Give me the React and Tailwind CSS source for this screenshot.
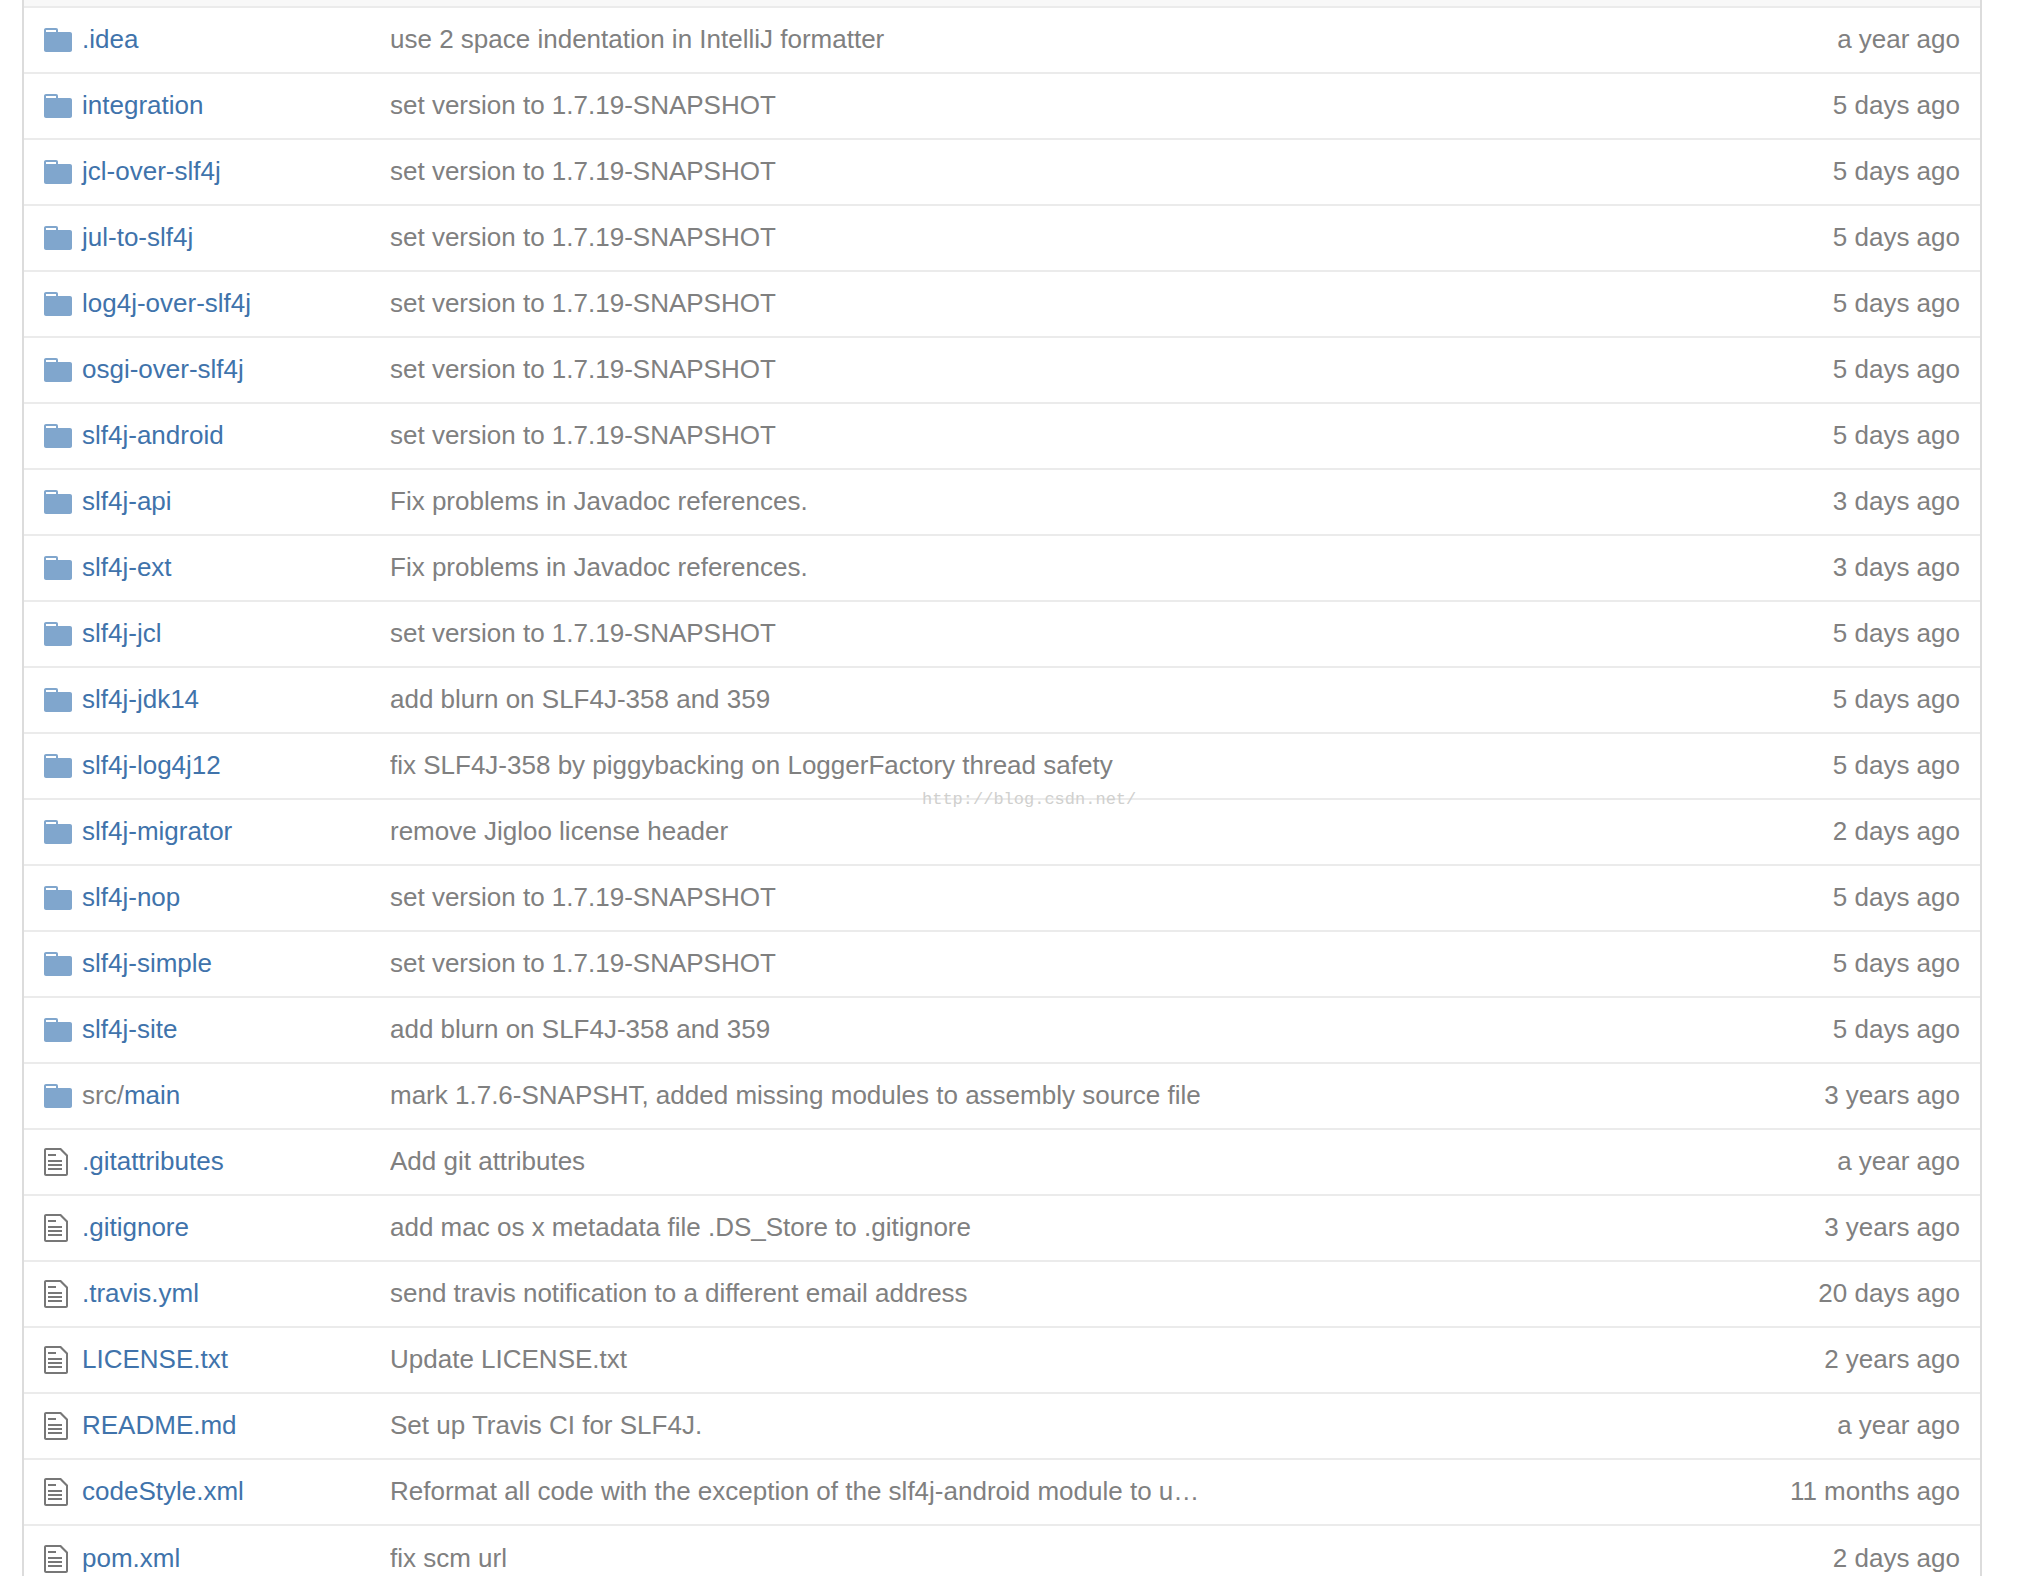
const SNAPSHOT = 'set version to 1.7.19-SNAPSHOT';

const entries = [
  { type: 'dir', name: '.idea', message: 'use 2 space indentation in IntelliJ formatter', age: 'a year ago' },
  { type: 'dir', name: 'integration', message: SNAPSHOT, age: '5 days ago' },
  { type: 'dir', name: 'jcl-over-slf4j', message: SNAPSHOT, age: '5 days ago' },
  { type: 'dir', name: 'jul-to-slf4j', message: SNAPSHOT, age: '5 days ago' },
  { type: 'dir', name: 'log4j-over-slf4j', message: SNAPSHOT, age: '5 days ago' },
  { type: 'dir', name: 'osgi-over-slf4j', message: SNAPSHOT, age: '5 days ago' },
  { type: 'dir', name: 'slf4j-android', message: SNAPSHOT, age: '5 days ago' },
  { type: 'dir', name: 'slf4j-api', message: 'Fix problems in Javadoc references.', age: '3 days ago' },
  { type: 'dir', name: 'slf4j-ext', message: 'Fix problems in Javadoc references.', age: '3 days ago' },
  { type: 'dir', name: 'slf4j-jcl', message: SNAPSHOT, age: '5 days ago' },
  { type: 'dir', name: 'slf4j-jdk14', message: 'add blurn on SLF4J-358 and 359', age: '5 days ago' },
  { type: 'dir', name: 'slf4j-log4j12', message: 'fix SLF4J-358 by piggybacking on LoggerFactory thread safety', age: '5 days ago' },
  { type: 'dir', name: 'slf4j-migrator', message: 'remove Jigloo license header', age: '2 days ago' },
  { type: 'dir', name: 'slf4j-nop', message: SNAPSHOT, age: '5 days ago' },
  { type: 'dir', name: 'slf4j-simple', message: SNAPSHOT, age: '5 days ago' },
  { type: 'dir', name: 'slf4j-site', message: 'add blurn on SLF4J-358 and 359', age: '5 days ago' },
  { type: 'dir', prefix: 'src/', name: 'main', message: 'mark 1.7.6-SNAPSHT, added missing modules to assembly source file', age: '3 years ago' },
  { type: 'file', name: '.gitattributes', message: 'Add git attributes', age: 'a year ago' },
  { type: 'file', name: '.gitignore', message: 'add mac os x metadata file .DS_Store to .gitignore', age: '3 years ago' },
  { type: 'file', name: '.travis.yml', message: 'send travis notification to a different email address', age: '20 days ago' },
  { type: 'file', name: 'LICENSE.txt', message: 'Update LICENSE.txt', age: '2 years ago' },
  { type: 'file', name: 'README.md', message: 'Set up Travis CI for SLF4J.', age: 'a year ago' },
  { type: 'file', name: 'codeStyle.xml', message: 'Reformat all code with the exception of the slf4j-android module to u…', age: '11 months ago' },
  { type: 'file', name: 'pom.xml', message: 'fix scm url', age: '2 days ago' },
];

function FolderIcon() {
  return (
    <svg className="block h-8 w-7 fill-[#80a6cd]" viewBox="0 0 14 16" aria-hidden="true">
      <path d="M13 4H7V3c0-.66-.31-1-1-1H1c-.55 0-1 .45-1 1v10c0 .55.45 1 1 1h12c.55 0 1-.45 1-1V5c0-.55-.45-1-1-1zM6 4H1V3h5v1z" />
    </svg>
  );
}

function FileIcon() {
  return (
    <svg className="block h-8 w-6 fill-[#777777]" viewBox="0 0 12 16" aria-hidden="true">
      <path d="M6 5H2V4h4v1zM2 8h7V7H2v1zm0 2h7V9H2v1zm0 2h7v-1H2v1zm10-7.5V14c0 .55-.45 1-1 1H1c-.55 0-1-.45-1-1V2c0-.55.45-1 1-1h7.5L12 4.5zM11 5L8 2H1v12h10V5z" />
    </svg>
  );
}

function EntryRow({ entry }) {
  return (
    <tr className="border-t-2 border-[#ebebeb]">
      <td className="h-[66px] w-[58px] p-0 pl-5">
        {entry.type === 'dir' ? <FolderIcon /> : <FileIcon />}
      </td>
      <td className="w-[308px] whitespace-nowrap p-0 pb-0.5">
        <a href="#" className="text-[#4073ab]">
          {entry.prefix && <span className="text-[#808080]">{entry.prefix}</span>}
          {entry.name}
        </a>
      </td>
      <td className="truncate p-0 pb-0.5">{entry.message}</td>
      <td className="w-64 whitespace-nowrap p-0 pb-0.5 pr-5 text-right">{entry.age}</td>
    </tr>
  );
}

export default function App() {
  return (
    <main className="relative h-screen overflow-hidden bg-white pl-[22px] pr-[54px] font-['Liberation_Sans',Arial,sans-serif] text-[26px] leading-8 text-[#808080]">
      <div className="border-x-2 border-[#dcdcdc]">
        <div className="h-1.5 bg-[#f8f8f8]" />
        <table className="w-full table-fixed border-collapse">
          <tbody>
            {entries.map((entry) => (
              <EntryRow key={entry.name} entry={entry} />
            ))}
          </tbody>
        </table>
      </div>
      <span className="pointer-events-none absolute left-[922px] top-[790px] font-['Liberation_Mono',monospace] text-[17px] leading-5 text-[#d0d0ce]">
        http://blog.csdn.net/
      </span>
    </main>
  );
}
